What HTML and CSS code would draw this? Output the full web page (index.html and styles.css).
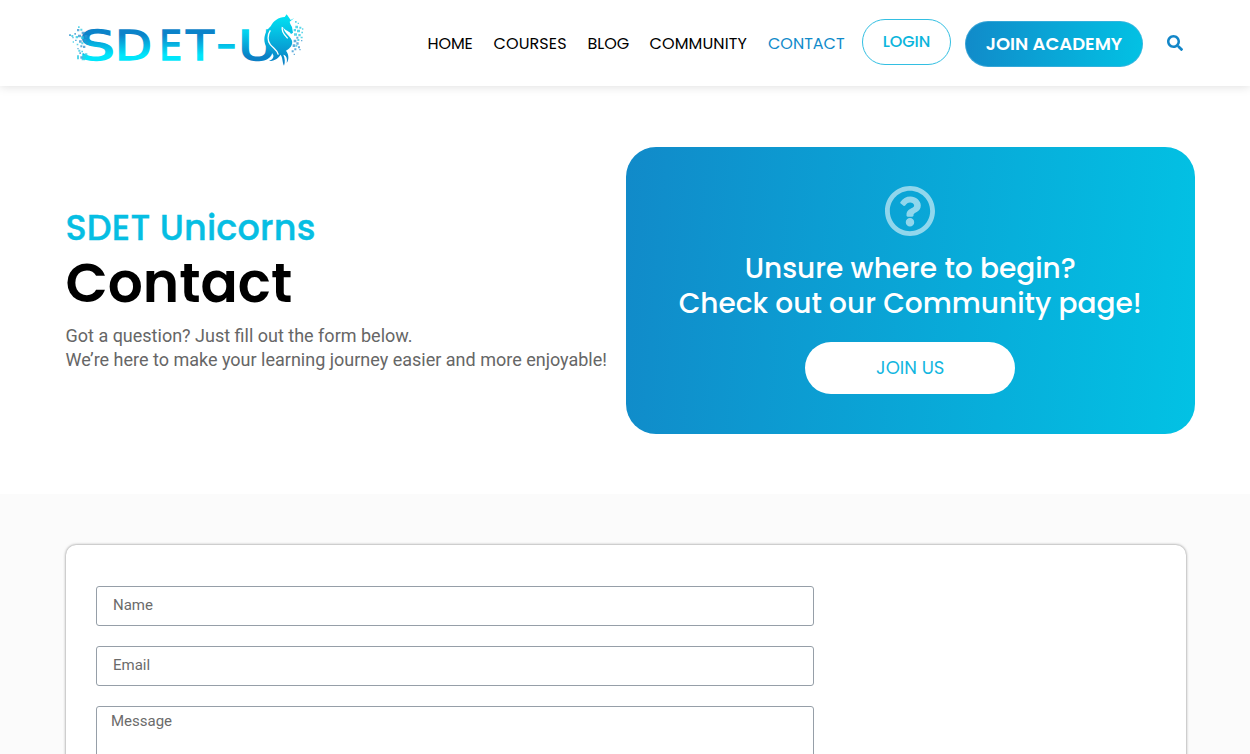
FILE: index.html
```html
<!DOCTYPE html>
<html lang="en">
<head>
<meta charset="utf-8">
<title>Contact - SDET Unicorns</title>
<link rel="stylesheet" href="styles.css">
</head>
<body>
<header class="header">
  <a class="logo" href="#" aria-label="SDET Unicorns">
    <svg class="logo-art" viewBox="0 0 780 210">
      <defs>
        <linearGradient id="dash" gradientUnits="userSpaceOnUse" x1="0" y1="-88" x2="0" y2="0"><stop offset=".15" stop-color="#0b83c9"/><stop offset=".85" stop-color="#00e6fb"/></linearGradient>
        <linearGradient id="up" gradientUnits="userSpaceOnUse" x1="0" y1="-88" x2="0" y2="0"><stop offset=".05" stop-color="#03d3ef"/><stop offset=".9" stop-color="#0a80c5"/></linearGradient>
        <linearGradient id="horse" gradientUnits="userSpaceOnUse" x1="0" y1="30" x2="0" y2="175"><stop offset="0" stop-color="#00e4f4"/><stop offset="1" stop-color="#0b80c5"/></linearGradient>
      </defs>
      <g class="logo-text" fill="url(#dash)" stroke="url(#dash)">
        <text transform="translate(72 164) scale(1.42 1)">S</text>
        <text transform="translate(180 164) scale(1.2 1)">D</text>
        <text transform="translate(313 164) scale(.9 1)">E</text>
        <text transform="translate(394 164) scale(1.13 1)">T</text>
        <text transform="translate(484 158) scale(1.4 1)">-</text>
        <text fill="url(#up)" stroke="url(#up)" transform="translate(550 164) scale(1.3 1)">U</text>
      </g>
      <path fill="url(#horse)" d="M718 39L707 45L695 28L689 36C671 36 655 48 647 64C630 79 625 99 630 116C634 130 652 139 655 151C657 159 650 165 642 168C661 168 672 158 676 149C684 157 681 169 687 182C691 171 690 160 685 149C694 151 698 161 695 174C704 162 700 145 693 137C706 130 714 119 711 107C705 92 688 84 684 67C692 79 702 77 708 87L714 83L711 66C707 59 705 55 704 50Z"/>
      <path fill="none" stroke="#fff" stroke-width="4" d="M646 76C637 90 637 108 646 119C656 131 667 135 670 149M682 66C678 81 690 91 698 100"/>
      <path class="bits-blue" d="M42 88h6v5h-6zM52 96h4v4h-4zM58 84h5v5h-5zM66 72h7v7h-7zM69 89h9v8h-9zM80 80h9v8h-9zM89 90h8v8h-8zM60 104h5v4h-5zM72 106h8v7h-8zM85 102h9v8h-9zM93 112h6v6h-6zM76 121h6v6h-6zM67 129h4v4h-4zM84 122h7v7h-7zM73 142h5v5h-5zM84 145h4v4h-4zM76 154h7v7h-7zM716 104h8v8h-8zM724 112h7v7h-7zM713 118h8v8h-8zM729 124h6v6h-6zM718 130h6v6h-6zM710 136h6v6h-6zM733 132h4v4h-4zM716 146h4v4h-4zM724 95h6v6h-6zM738 105h4v4h-4z"/>
      <path class="bits-cyan" d="M49 90h6v6h-6zM69 64h5v5h-5zM76 71h6v6h-6zM62 93h7v7h-7zM78 94h8v8h-8zM53 109h4v4h-4zM65 116h5v5h-5zM79 112h6v6h-6zM70 134h6v6h-6zM79 137h5v5h-5zM66 151h6v12h-6zM84 152h9v7h-9zM80 160h10v6h-10zM90 145h7v9h-7zM720 48h5v5h-5zM728 53h4v4h-4zM721 62h8v8h-8zM733 65h6v6h-6zM716 72h7v7h-7zM726 74h9v8h-9zM739 80h5v5h-5zM717 85h9v7h-9zM730 87h7v7h-7zM741 70h4v4h-4zM737 95h6v5h-6zM727 102h6v6h-6zM722 120h5v5h-5z"/>
    </svg>
  </a>
  <nav class="nav">
    <a class="nav-link home" href="#">HOME</a>
    <a class="nav-link courses" href="#">COURSES</a>
    <a class="nav-link blog" href="#">BLOG</a>
    <a class="nav-link community" href="#">COMMUNITY</a>
    <a class="nav-link contact" href="#">CONTACT</a>
  </nav>
  <a class="btn-login" href="#">LOGIN</a>
  <a class="btn-join" href="#">JOIN ACADEMY</a>
  <a class="search" href="#" aria-label="Search">
    <svg viewBox="0 0 512 512" width="16" height="16"><path fill="#1286c8" d="M505 442.7L405.300 343c-4.500-4.500-10.600-7-17-7H372c27.600-35.300 44-79.700 44-128C416 93.100 322.900 0 208 0S0 93.100 0 208s93.100 208 208 208c48.300 0 92.700-16.400 128-44v16.300c0 6.400 2.500 12.500 7 17l99.700 99.700c9.400 9.400 24.600 9.400 33.900 0l28.300-28.300c9.400-9.400 9.400-24.600.1-34zM208 336c-70.700 0-128-57.200-128-128 0-70.700 57.200-128 128-128 70.700 0 128 57.200 128 128 0 70.700-57.200 128-128 128z"/></svg>
  </a>
</header>
<main>
  <section class="hero">
    <div class="intro">
      <h2 class="brand">SDET Unicorns</h2>
      <h1 class="title">Contact</h1>
      <p class="lead">Got a question? Just fill out the form below.<br>We’re here to make your learning journey easier and more enjoyable!</p>
    </div>
    <div class="promo">
      <svg class="question" viewBox="8 8 496 496" width="50" height="50"><path fill="#fff" fill-opacity=".55" d="M256 8C119 8 8 119.100 8 256c0 137 111 248 248 248s248-111 248-248C504 119.100 393 8 256 8zm0 448c-110.500 0-200-89.400-200-200 0-110.500 89.500-200 200-200 110.500 0 200 89.500 200 200 0 110.500-89.400 200-200 200zm107.200-255.200c0 67.100-72.400 68.100-72.400 92.900V300c0 6.600-5.400 12-12 12h-45.600c-6.600 0-12-5.400-12-12v-8.700c0-35.700 27.100-50 47.600-61.500 17.600-9.800 28.300-16.500 28.300-29.600 0-17.200-22-28.700-39.800-28.700-23.200 0-33.900 11-48.900 30-4.100 5.100-11.500 6.100-16.700 2.100l-27.800-21.100c-5.100-3.900-6.300-11.100-2.600-16.400C184.800 131.500 214.900 112 261.800 112c49.100 0 101.500 38.300 101.500 88.800zM298 368c0 23.200-18.800 42-42 42s-42-18.800-42-42 18.800-42 42-42 42 18.800 42 42z"/></svg>
      <h3 class="promo-title">Unsure where to begin?<br>Check out our Community page!</h3>
      <a class="btn-us" href="#">JOIN US</a>
    </div>
  </section>
  <section class="form-section">
    <form class="form-card">
      <input class="field" type="text" placeholder="Name">
      <input class="field" type="email" placeholder="Email">
      <textarea class="field message" placeholder="Message"></textarea>
    </form>
  </section>
</main>
</body>
</html>
```
FILE: styles.css
```css
* { box-sizing: border-box; }
body { margin: 0; background: #fff; font-family: Roboto, sans-serif; }
a { text-decoration: none; }
h1, h2, h3, p { margin: 0; }

.header { display: flex; align-items: flex-start; height: 86px; padding-left: 55px; background: #fff; box-shadow: 0 0 10px rgba(0, 0, 0, .15); font-family: Poppins, Inter, sans-serif; white-space: nowrap; }
.logo { width: 260px; height: 70px; margin-top: 5px; }
.logo-art { display: block; width: 260px; height: 70px; }
.logo-text { font: 400 120px "DejaVu Sans", sans-serif; stroke-width: 4px; }
.bits-blue { fill: #2f93cf; opacity: .75; }
.bits-cyan { fill: #31cce3; opacity: .8; }

.nav { display: flex; gap: 20px; margin: 32px 0 0 112.5px; }
.nav-link { color: #000; font-size: 16px; line-height: 24px; }
.home { width: 46px; letter-spacing: -.1px; }
.courses { width: 74px; letter-spacing: .1px; }
.blog { width: 42px; }
.community { width: 98.5px; letter-spacing: .1px; }
.contact { width: 78px; color: #118bca; }
.btn-login { width: 89px; height: 46px; margin: 19px 0 0 16px; border: 1px solid #33bfe2; border-radius: 23px; color: #0bb5dc; font-size: 16px; font-weight: 500; line-height: 44px; text-align: center; letter-spacing: -.1px; }
.btn-join { width: 178px; height: 46px; margin: 21px 0 0 14px; border: 1px solid rgba(80, 178, 222, .6); border-radius: 23px; background: linear-gradient(95deg, #118ac9, #02c2e4) border-box; color: #fff; font-size: 18px; font-weight: 600; line-height: 44px; text-align: center; }
.search { margin: 35px 0 0 24px; }
.search svg { display: block; }

.hero { display: flex; height: 408px; padding: 61px 55px 60px 65.5px; }
.intro { flex: none; width: 560px; padding-top: 60px; }
.brand { color: #06bee3; font: 500 35px/42px Poppins, Inter, sans-serif; letter-spacing: .2px; -webkit-text-stroke: .4px #06bee3; white-space: nowrap; }
.title { margin-top: 1px; color: #000; font: 600 55px/66px Poppins, Inter, sans-serif; }
.lead { margin-top: 8px; color: #666; font-size: 18px; line-height: 24px; white-space: nowrap; }
.promo { display: flex; flex-direction: column; align-items: center; flex: 1; padding-top: 39px; border-radius: 30px; background: linear-gradient(95deg, #118ac9, #02c2e4); }
.question { display: block; flex: none; }
.promo-title { margin-top: 15px; color: #fff; font: 500 28px/35px Poppins, Inter, sans-serif; text-align: center; white-space: nowrap; }
.btn-us { width: 210px; height: 52px; margin-top: 21px; border-radius: 26px; background: #fff; color: #12b6df; font: 400 18px/52px Poppins, Inter, sans-serif; text-align: center; }

.form-section { height: 260px; padding: 51px 64px 0 66px; overflow: hidden; background: #fbfbfb; }
.form-card { display: flex; flex-direction: column; gap: 20px; height: 240px; padding: 41px 30px 0; border-radius: 10px; background: #fff; box-shadow: 0 0 3px rgba(0, 0, 0, .5); }
.field { flex: none; width: 718px; height: 40px; margin: 0; padding: 0 16px 3px; border: 1px solid #969fa8; border-radius: 3px; outline: none; background: #fff; font: 400 15px/20px Roboto, sans-serif; }
.field::placeholder { color: #6b6b6b; opacity: 1; }
.message { height: 120px; padding: 4px 14px; resize: none; }
```
